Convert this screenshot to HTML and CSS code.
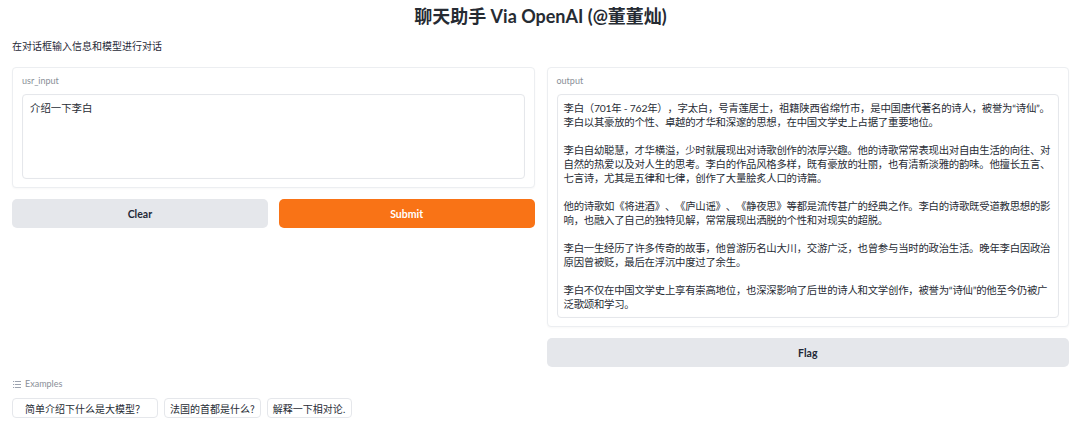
FILE: index.html
```html
<!DOCTYPE html>
<html lang="zh-CN">
<head>
<meta charset="utf-8">
<title>聊天助手</title>
<link rel="stylesheet" href="styles.css">
</head>
<body>
<div class="page">
  <h1 class="title">聊天助手 Via OpenAI (@董董灿)</h1>
  <p class="desc">在对话框输入信息和模型进行对话</p>
  <div class="row">
    <div class="col">
      <div class="panel">
        <div class="label">usr_input</div>
        <div class="box box-input">介绍一下李白</div>
      </div>
      <div class="btnrow">
        <button class="btn btn-secondary">Clear</button>
        <button class="btn btn-primary">Submit</button>
      </div>
    </div>
    <div class="col">
      <div class="panel">
        <div class="label">output</div>
        <div class="box box-output">李白（701年 - 762年），字太白，号青莲居士，祖籍陕西省绵竹市，是中国唐代著名的诗人，被誉为“诗仙”。
李白以其豪放的个性、卓越的才华和深邃的思想，在中国文学史上占据了重要地位。

李白自幼聪慧，才华横溢，少时就展现出对诗歌创作的浓厚兴趣。他的诗歌常常表现出对自由生活的向往、对
自然的热爱以及对人生的思考。李白的作品风格多样，既有豪放的壮丽，也有清新淡雅的韵味。他擅长五言、
七言诗，尤其是五律和七律，创作了大量脍炙人口的诗篇。

他的诗歌如《将进酒》、《庐山谣》、《静夜思》等都是流传甚广的经典之作。李白的诗歌既受道教思想的影
响，也融入了自己的独特见解，常常展现出洒脱的个性和对现实的超脱。

李白一生经历了许多传奇的故事，他曾游历名山大川，交游广泛，也曾参与当时的政治生活。晚年李白因政治
原因曾被贬，最后在浮沉中度过了余生。

李白不仅在中国文学史上享有崇高地位，也深深影响了后世的诗人和文学创作，被誉为“诗仙”的他至今仍被广
泛歌颂和学习。</div>
      </div>
      <button class="btn btn-secondary btn-flag">Flag</button>
    </div>
  </div>
  <div class="examples">
    <div class="ex-label">
      <svg class="ex-icon" width="8" height="7" viewBox="0 0 8 7">
        <rect x="0" y="0" width="1.2" height="1" fill="#9ca3af"/>
        <rect x="2" y="0" width="6" height="1" fill="#9ca3af"/>
        <rect x="0" y="3" width="1.2" height="1" fill="#9ca3af"/>
        <rect x="2" y="3" width="6" height="1" fill="#9ca3af"/>
        <rect x="0" y="6" width="1.2" height="1" fill="#9ca3af"/>
        <rect x="2" y="6" width="6" height="1" fill="#9ca3af"/>
      </svg>
      <span>Examples</span>
    </div>
    <div class="ex-list">
      <button class="ex-btn ex-btn-wide">简单介绍下什么是大模型？</button>
      <button class="ex-btn">法国的首都是什么?</button>
      <button class="ex-btn">解释一下相对论.</button>
    </div>
  </div>
</div>
</body>
</html>
```

FILE: styles.css
```css
html, body {
  margin: 0;
  padding: 0;
  background: #ffffff;
}

body {
  font-family: "Lato", "Noto Sans CJK SC", sans-serif;
  color: #1f2937;
}

.page {
  padding: 0 11px 0 12px;
}

.title {
  margin: 5px 0 0;
  font-size: 18px;
  line-height: 22px;
  font-weight: 700;
  text-align: center;
  color: #262b33;
}

.desc {
  margin: 12px 0 0;
  font-size: 10px;
  line-height: 14px;
  color: #1f2937;
}

.row {
  display: flex;
  gap: 12px;
  margin-top: 14px;
}

.col {
  flex: 1 1 0;
  display: flex;
  flex-direction: column;
  gap: 11px;
  min-width: 0;
}

.panel {
  border: 1px solid #eceef1;
  border-radius: 4px;
  padding: 7px 9px 8px;
  background: #fff;
  box-shadow: 0 1px 2px rgba(0, 0, 0, 0.03);
}

.label {
  font-size: 9px;
  line-height: 12px;
  color: #8a8f98;
  margin-bottom: 7px;
}

.box {
  border: 1px solid #e5e7eb;
  border-radius: 4px;
  background: #fff;
  font-family: "Lato", "Noto Sans CJK SC", sans-serif;
  font-size: 10.4px;
  line-height: 14px;
  color: #272c35;
  text-spacing-trim: space-all;
  box-shadow: inset 0 0 1px rgba(0, 0, 0, 0.04);
}

.box-input {
  height: 71px;
  padding: 6px 7px;
}

.box-output {
  padding: 6px 6px;
  white-space: pre;
  overflow: hidden;
  letter-spacing: -0.25px;
}

.btnrow {
  display: flex;
  gap: 11px;
}

.btn {
  flex: 1 1 0;
  height: 29px;
  border: none;
  border-radius: 5px;
  font-family: "Lato", "Noto Sans CJK SC", sans-serif;
  font-size: 10.5px;
  font-weight: 700;
  cursor: pointer;
}

.btn-secondary {
  background: #e5e7eb;
  color: #1f2937;
}

.btn-primary {
  background: #f97316;
  color: #ffffff;
}

.btn-flag {
  flex: none;
  height: 29px;
}

.examples {
  margin-top: 11px;
}

.ex-label {
  display: flex;
  align-items: center;
  gap: 4px;
  font-size: 9px;
  line-height: 12px;
  color: #8a8f98;
  padding-left: 1px;
}

.ex-list {
  display: flex;
  gap: 6px;
  margin-top: 8px;
}

.ex-btn {
  height: 20px;
  padding: 0 5px;
  border: 1px solid #e5e7eb;
  border-radius: 4px;
  background: #fff;
  font-family: "Noto Sans CJK SC", sans-serif;
  font-size: 10px;
  color: #272c35;
  text-spacing-trim: space-all;
}

.ex-btn-wide {
  padding: 0 12px;
}
```
